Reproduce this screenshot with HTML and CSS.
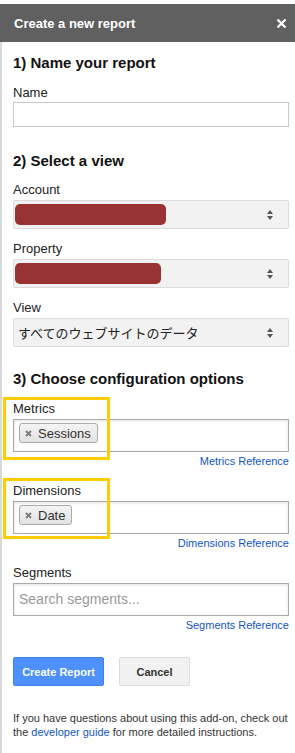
FILE: index.html
```html
<!DOCTYPE html>
<html>
<head>
<meta charset="utf-8">
<link rel="stylesheet" href="styles.css">
</head>
<body>
<div class="dialog">
  <div class="titlebar">
    <span class="title">Create a new report</span>
    <span class="close">
      <svg width="11" height="11" viewBox="0 0 11 11"><path d="M1.5 1.5 L9.5 9.5 M9.5 1.5 L1.5 9.5" stroke="#fff" stroke-width="2.2" fill="none"/></svg>
    </span>
  </div>
  <div class="content">
    <h2 class="h-first">1) Name your report</h2>
    <div class="label l-first">Name</div>
    <div class="input"></div>

    <h2 class="h-second">2) Select a view</h2>
    <div class="label l-account">Account</div>
    <div class="select"><span class="redact r1"></span><span class="arrows"></span></div>
    <div class="label l-gap">Property</div>
    <div class="select"><span class="redact r2"></span><span class="arrows"></span></div>
    <div class="label l-gap">View</div>
    <div class="select"><span class="select-text">すべてのウェブサイトのデータ</span><span class="arrows"></span></div>

    <h2 class="h-third">3) Choose configuration options</h2>
    <div class="field f-metrics">
      <div class="highlight"></div>
      <div class="label">Metrics</div>
      <div class="tags"><span class="chip"><svg class="chip-x" width="7" height="7" viewBox="0 0 7 7"><path d="M1 1 L6 6 M6 1 L1 6" stroke="#7a7a7a" stroke-width="1.8" fill="none"/></svg>Sessions</span></div>
      <a class="ref">Metrics Reference</a>
    </div>
    <div class="field f-next">
      <div class="highlight hl2"></div>
      <div class="label">Dimensions</div>
      <div class="tags"><span class="chip"><svg class="chip-x" width="7" height="7" viewBox="0 0 7 7"><path d="M1 1 L6 6 M6 1 L1 6" stroke="#7a7a7a" stroke-width="1.8" fill="none"/></svg>Date</span></div>
      <a class="ref">Dimensions Reference</a>
    </div>
    <div class="field f-next">
      <div class="label">Segments</div>
      <div class="tags"><span class="placeholder">Search segments...</span></div>
      <a class="ref">Segments Reference</a>
    </div>

    <div class="buttons">
      <button class="btn btn-primary">Create Report</button>
      <button class="btn btn-cancel">Cancel</button>
    </div>

    <p class="footer">If you have questions about using this add-on, check out the <a class="link">developer guide</a> for more detailed instructions.</p>
  </div>
</div>
</body>
</html>
```

FILE: styles.css
```css
html, body {
  margin: 0;
  padding: 0;
  background: #fff;
}
body {
  font-family: Arial, "Liberation Sans", sans-serif;
  color: #222;
  width: 295px;
  height: 753px;
  overflow: hidden;
}
.dialog {
  padding-top: 4px;
}
.titlebar {
  height: 38px;
  background: #606060;
  display: flex;
  align-items: center;
  justify-content: space-between;
  padding: 0 8px 0 14px;
}
.title {
  color: #fff;
  font-size: 13px;
  font-weight: bold;
}
.close {
  display: flex;
  width: 11px;
  height: 11px;
}
.content {
  border-left: 2px solid #dadada;
  padding: 0 6px 40px 11px;
}
h2 {
  font-size: 15px;
  font-weight: bold;
  line-height: 20px;
  margin: 0;
  color: #111;
}
.h-first { padding-top: 11px; }
.h-second { margin-top: 24px; }
.h-third { margin-top: 22px; }
.label {
  font-size: 13px;
  line-height: 16px;
  color: #222;
}
.l-first { margin-top: 12px; }
.l-account { margin-top: 11px; }
.l-gap { margin-top: 12px; }
.input {
  margin-top: 1px;
  height: 25px;
  box-sizing: border-box;
  border: 1px solid #c8c8c8;
}
.select {
  margin-top: 2px;
  height: 29px;
  box-sizing: border-box;
  border: 1px solid #dcdcdc;
  border-radius: 2px;
  background: #f2f2f2;
  display: flex;
  align-items: center;
  position: relative;
}
.redact {
  display: block;
  height: 21px;
  background: #993333;
  border-radius: 5px;
  margin-left: 1px;
}
.r1 { width: 151px; }
.r2 { width: 146px; }
.select-text {
  font-family: "Noto Sans CJK JP", sans-serif;
  font-size: 13px;
  color: #222;
  padding-left: 4px;
}
.arrows {
  margin-left: auto;
  margin-right: 14px;
  width: 7px;
  height: 10px;
  position: relative;
}
.arrows::before, .arrows::after {
  content: "";
  position: absolute;
  left: 0;
  border-left: 3.5px solid transparent;
  border-right: 3.5px solid transparent;
}
.arrows::before {
  top: 0;
  border-bottom: 4px solid #555;
}
.arrows::after {
  bottom: 0;
  border-top: 4px solid #555;
}
.field {
  position: relative;
}
.f-metrics { margin-top: 12px; }
.f-next { margin-top: 14px; }
.field .label { margin-bottom: 2px; }
.highlight {
  position: absolute;
  left: -10px;
  top: -4px;
  width: 107px;
  height: 63px;
  box-sizing: border-box;
  border: 3px solid #ffcc00;
  pointer-events: none;
}
.hl2 { top: -5px; height: 61px; }
.tags {
  height: 33px;
  box-sizing: border-box;
  border: 1px solid #aaa;
  box-shadow: inset 0 1px 3px rgba(0,0,0,0.12);
  padding: 3px 0 0 5px;
  display: flex;
  align-items: flex-start;
}
.chip {
  display: inline-flex;
  align-items: center;
  height: 20px;
  box-sizing: border-box;
  border: 1px solid #aaa;
  border-radius: 3px;
  background: linear-gradient(#f4f4f4, #e2e2e2);
  font-size: 13px;
  color: #333;
  padding: 0 6px 0 5px;
}
.chip-x {
  display: block;
  margin: 1px 6px 0 0;
}
.placeholder {
  font-size: 14px;
  color: #999;
  line-height: 25px;
  padding-left: 0;
}
.ref {
  display: block;
  margin-top: 1px;
  text-align: right;
  font-size: 11px;
  line-height: 16px;
  color: #1155cc;
}
.buttons {
  margin-top: 24px;
  display: flex;
  gap: 15px;
}
.btn {
  height: 29px;
  box-sizing: border-box;
  font-family: Arial, "Liberation Sans", sans-serif;
  font-size: 11px;
  font-weight: bold;
  border-radius: 2px;
  padding: 0;
  margin: 0;
}
.btn-primary {
  width: 91px;
  background: #4d90fe;
  border: 1px solid #3d80ee;
  color: #fff;
}
.btn-cancel {
  width: 71px;
  background: #f1f1f1;
  border: 1px solid #dcdcdc;
  color: #333;
}
.footer {
  margin: 25px 0 0;
  font-size: 11px;
  line-height: 14px;
  color: #333;
}
.link {
  color: #1155cc;
}
```
